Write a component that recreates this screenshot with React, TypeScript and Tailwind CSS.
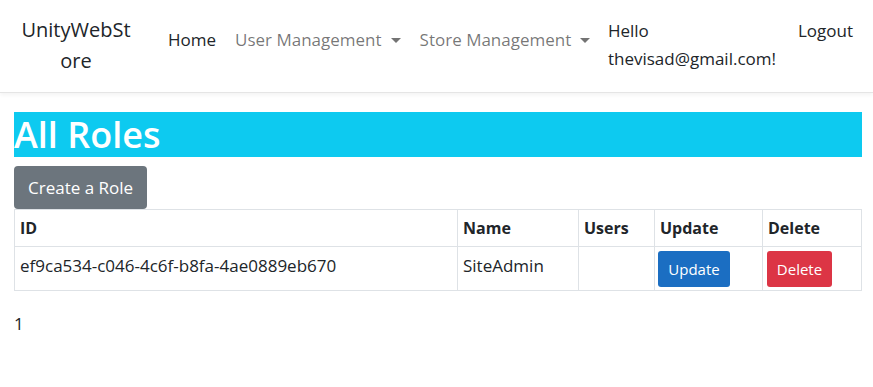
export default function App() {
  return (
    <div className="min-h-[387px] bg-white text-[#212529] font-['Open_Sans',sans-serif] text-[17px]">
      {/* Navbar */}
      <nav className="h-[93px] flex items-start pl-5 pr-5 border-b border-[#e5e5e5] shadow-[0_2px_4px_rgba(0,0,0,0.05)]">
        <div className="w-[112px] text-center text-[20px] leading-[31px] mt-[14px] mr-[28px]">
          <span className="block">UnityWebSt</span>
          <span className="block">ore</span>
        </div>
        <div className="flex items-center mt-[27px] leading-[26px]">
          <a className="px-2 text-[#212529]">Home</a>
          <a className="px-2 ml-[3px] text-[rgba(0,0,0,0.55)] flex items-center">
            User Management
            <span className="ml-[9px] border-x-[5px] border-t-[5px] border-x-transparent border-t-[rgba(0,0,0,0.55)]" />
          </a>
          <a className="px-2 ml-[3px] text-[rgba(0,0,0,0.55)] flex items-center">
            Store Management
            <span className="ml-[9px] border-x-[5px] border-t-[5px] border-x-transparent border-t-[rgba(0,0,0,0.55)]" />
          </a>
        </div>
        <div className="ml-auto pt-[17px] flex gap-[18px]">
          <div className="leading-[28px] w-[172px]">
            Hello
            <br />
            thevisad@gmail.com!
          </div>
          <div className="leading-[28px]">Logout</div>
        </div>
      </nav>

      {/* Content */}
      <main className="pl-[14px] pr-[11px] pt-[19px]">
        <h1 className="bg-[#0dcaf0] text-white text-[36px] font-semibold leading-[45px] h-[45px]">All Roles</h1>
        <button className="mt-[9px] h-[43px] px-[14px] bg-[#6c757d] text-white text-[17px] rounded-[4px]">
          Create a Role
        </button>
        <table className="w-full border-collapse">
          <thead>
            <tr className="h-[37px] font-bold text-left text-[16px]">
              <th className="w-[443px] border border-[#dee2e6] px-[5px]">ID</th>
              <th className="w-[121px] border border-[#dee2e6] px-[5px]">Name</th>
              <th className="w-[76px] border border-[#dee2e6] px-[5px]">Users</th>
              <th className="w-[108px] border border-[#dee2e6] px-[5px]">Update</th>
              <th className="border border-[#dee2e6] px-[5px]">Delete</th>
            </tr>
          </thead>
          <tbody>
            <tr className="h-[44px] align-top">
              <td className="border border-[#dee2e6] px-[5px] pt-[6px]">ef9ca534-c046-4c6f-b8fa-4ae0889eb670</td>
              <td className="border border-[#dee2e6] px-[5px] pt-[6px]">SiteAdmin</td>
              <td className="border border-[#dee2e6] px-[5px]"></td>
              <td className="border border-[#dee2e6] px-[3px] pt-[4px]">
                <button className="h-[36px] w-[72px] bg-[#1b6ec2] text-white text-[15px] rounded-[3px]">Update</button>
              </td>
              <td className="border border-[#dee2e6] px-[4px] pt-[4px]">
                <button className="h-[36px] w-[65px] bg-[#dc3545] text-white text-[15px] rounded-[3px]">Delete</button>
              </td>
            </tr>
          </tbody>
        </table>
        <p className="mt-[20px]">1</p>
      </main>
    </div>
  );
}
